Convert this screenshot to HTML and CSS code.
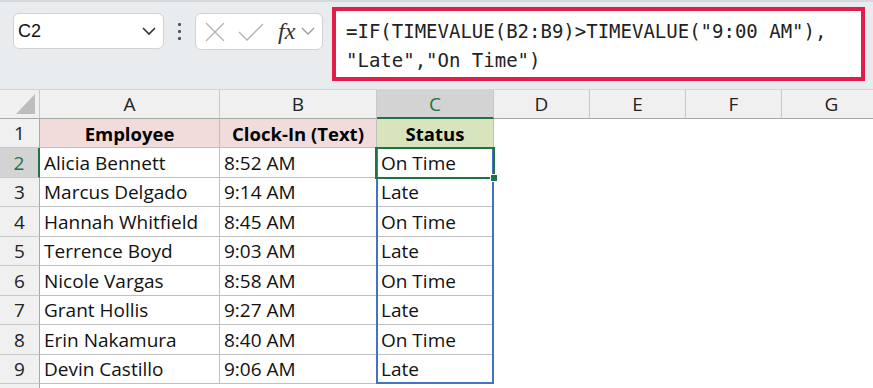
FILE: index.html
```html
<!DOCTYPE html>
<html lang="en">
<head>
    <meta charset="UTF-8">
    <title>Status sheet</title>
    <link rel="stylesheet" href="styles.css">
</head>
<body>
    <div class="topbar">
        <div class="namebox">
            <span>C2</span>
            <svg width="16" height="10" viewBox="0 0 16 10"><path d="M2 2 L8 8 L14 2" fill="none" stroke="#333" stroke-width="1.6"/></svg>
        </div>
        <div class="dots"><i></i><i></i><i></i></div>
        <div class="fxbox">
            <svg width="22" height="20" viewBox="0 0 22 20"><path d="M2 1 L20 19 M20 1 L2 19" fill="none" stroke="#b3b3b3" stroke-width="1.3"/></svg>
            <svg width="26" height="20" viewBox="0 0 26 20"><path d="M1 10 L9 18 L25 2" fill="none" stroke="#b3b3b3" stroke-width="1.3"/></svg>
            <span class="fx">fx</span>
            <svg width="14" height="9" viewBox="0 0 14 9"><path d="M1 1 L7 7 L13 1" fill="none" stroke="#9a9a9a" stroke-width="1.3"/></svg>
        </div>
        <div class="formula">
            <div>=IF(TIMEVALUE(B2:B9)&gt;TIMEVALUE("9:00 AM"),</div>
            <div>"Late","On Time")</div>
        </div>
    </div>

    <div class="sheet">
        <div class="colhead corner">
            <svg width="19" height="20" viewBox="0 0 19 20"><path d="M19 0 L19 20 L0 20 Z" fill="#bdbdbd"/></svg>
        </div>
        <div class="colhead">A</div>
        <div class="colhead">B</div>
        <div class="colhead sel">C</div>
        <div class="colhead">D</div>
        <div class="colhead">E</div>
        <div class="colhead">F</div>
        <div class="colhead">G</div>

        <div class="rowhead">1</div>
        <div class="cell th pink">Employee</div>
        <div class="cell th pink">Clock-In (Text)</div>
        <div class="cell th green">Status</div>
        <div class="blank"></div><div class="blank"></div><div class="blank"></div><div class="blank"></div>

        <div class="rowhead sel">2</div>
        <div class="cell">Alicia Bennett</div>
        <div class="cell">8:52 AM</div>
        <div class="cell current">
            On Time
            <!-- spill range and active cell outlines -->
            <span class="spill"></span>
            <span class="active"><span class="handle"></span></span>
        </div>
        <div class="blank"></div><div class="blank"></div><div class="blank"></div><div class="blank"></div>

        <div class="rowhead">3</div>
        <div class="cell">Marcus Delgado</div>
        <div class="cell">9:14 AM</div>
        <div class="cell">Late</div>
        <div class="blank"></div><div class="blank"></div><div class="blank"></div><div class="blank"></div>

        <div class="rowhead">4</div>
        <div class="cell">Hannah Whitfield</div>
        <div class="cell">8:45 AM</div>
        <div class="cell">On Time</div>
        <div class="blank"></div><div class="blank"></div><div class="blank"></div><div class="blank"></div>

        <div class="rowhead">5</div>
        <div class="cell">Terrence Boyd</div>
        <div class="cell">9:03 AM</div>
        <div class="cell">Late</div>
        <div class="blank"></div><div class="blank"></div><div class="blank"></div><div class="blank"></div>

        <div class="rowhead">6</div>
        <div class="cell">Nicole Vargas</div>
        <div class="cell">8:58 AM</div>
        <div class="cell">On Time</div>
        <div class="blank"></div><div class="blank"></div><div class="blank"></div><div class="blank"></div>

        <div class="rowhead">7</div>
        <div class="cell">Grant Hollis</div>
        <div class="cell">9:27 AM</div>
        <div class="cell">Late</div>
        <div class="blank"></div><div class="blank"></div><div class="blank"></div><div class="blank"></div>

        <div class="rowhead">8</div>
        <div class="cell">Erin Nakamura</div>
        <div class="cell">8:40 AM</div>
        <div class="cell">On Time</div>
        <div class="blank"></div><div class="blank"></div><div class="blank"></div><div class="blank"></div>

        <div class="rowhead">9</div>
        <div class="cell">Devin Castillo</div>
        <div class="cell">9:06 AM</div>
        <div class="cell">Late</div>
        <div class="blank"></div><div class="blank"></div><div class="blank"></div><div class="blank"></div>

        <div class="rowhead"></div>
    </div>
</body>
</html>
```

FILE: styles.css
```css
body {
    margin: 0;
    width: 873px;
    height: 388px;
    overflow: hidden;
    background: #fff;
    font-family: "Open Sans", "Noto Sans", sans-serif;
    color: #111;
}

.topbar {
    height: 90px;
    box-sizing: border-box;
    background: #e9ecef;
    border-top: 2px solid #d6d9dc;
    border-bottom: 1px solid #d4d4d4;
    display: flex;
    align-items: flex-start;
    padding: 5px 8px 0 13px;
}

.namebox {
    margin-top: 6px;
    width: 151px;
    height: 36px;
    box-sizing: border-box;
    background: #fff;
    border: 1px solid #d2d2d2;
    border-radius: 6px;
    display: flex;
    align-items: center;
    justify-content: space-between;
    padding: 0 6px 0 4px;
    font-family: "Liberation Sans", Arial, sans-serif;
    font-size: 18px;
    color: #111;
}

.dots {
    margin: 16px 14px 0 14px;
    display: flex;
    flex-direction: column;
    gap: 4px;
}
.dots i {
    width: 3px;
    height: 3px;
    background: #555;
    border-radius: 1px;
}

.fxbox {
    margin-top: 6px;
    width: 128px;
    height: 37px;
    box-sizing: border-box;
    background: #fff;
    border: 1px solid #d2d2d2;
    border-radius: 6px;
    display: flex;
    align-items: center;
    padding: 0 4px 0 8px;
    gap: 12px;
}
.fxbox .fx {
    font-family: "Liberation Serif", "DejaVu Serif", serif;
    font-style: italic;
    font-size: 24px;
    color: #333;
    margin-left: 2px;
    margin-right: -6px;
}

.formula {
    margin-left: 9px;
    width: 533px;
    height: 74px;
    box-sizing: border-box;
    border: 4px solid #e31c4b;
    background: #fff;
    padding: 6px 0 0 10px;
    font-family: "DejaVu Sans Mono", monospace;
    font-size: 19px;
    line-height: 29px;
    color: #222;
    white-space: nowrap;
}

.sheet {
    display: grid;
    grid-template-columns: 40px 180px 157px 117px 96px 96px 96px 100px;
    grid-template-rows: 29px 29px 30px 29px 30px 29px 30px 29px 30px 29px 30px;
    font-size: 19px;
}

.colhead {
    box-sizing: border-box;
    background: #f0f0f0;
    border-right: 1px solid #c8c8c8;
    border-bottom: 1px solid #a8a8a8;
    display: flex;
    align-items: center;
    justify-content: center;
    color: #222;
}
.colhead.sel {
    background: #d3d3d3;
    color: #217346;
    border-bottom: 2px solid #217346;
}
.corner {
    justify-content: flex-end;
    align-items: flex-end;
    padding: 0 4px 4px 0;
}

.rowhead {
    box-sizing: border-box;
    background: #f0f0f0;
    border-right: 1px solid #a8a8a8;
    border-bottom: 1px solid #c8c8c8;
    display: flex;
    align-items: center;
    justify-content: center;
    color: #222;
}
.rowhead.sel {
    background: #d3d3d3;
    color: #217346;
    border-right: 2px solid #217346;
}

.cell {
    box-sizing: border-box;
    border-right: 1px solid #bfbfbf;
    border-bottom: 1px solid #bfbfbf;
    display: flex;
    align-items: center;
    padding: 0 4px;
    white-space: nowrap;
}
.cell.th {
    justify-content: center;
    font-weight: bold;
    font-size: 18.5px;
    color: #000;
}
.pink {
    background: #f2dcdb;
}
.green {
    background: #d8e4bc;
}

.current {
    position: relative;
}
.spill {
    position: absolute;
    left: -1px;
    top: 0;
    width: 118px;
    height: 236px;
    box-sizing: border-box;
    border: 2px solid #4472c4;
    border-top: none;
    z-index: 1;
}
.active {
    position: absolute;
    left: -2px;
    top: -1px;
    width: 120px;
    height: 32px;
    box-sizing: border-box;
    border: 2px solid #217346;
    z-index: 2;
}
.handle {
    position: absolute;
    right: -5px;
    bottom: -5px;
    width: 6px;
    height: 6px;
    background: #217346;
    border: 1px solid #fff;
}
```
